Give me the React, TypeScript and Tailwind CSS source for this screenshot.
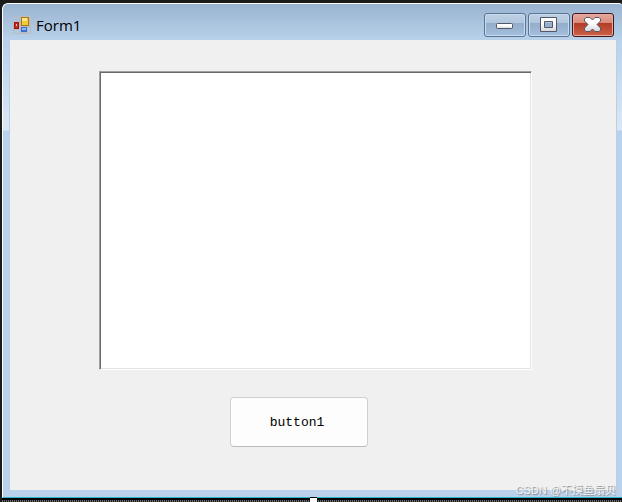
import type { ReactNode } from "react";

const FormIcon = () => (
  <svg width="18" height="18" viewBox="0 0 18 18" shapeRendering="crispEdges">
    <rect width="18" height="18" fill="#b9bcc2" />
    <rect x="1" y="1" width="6" height="4" fill="#a9c0dc" />
    <rect x="1" y="14" width="6" height="3" fill="#b4c8e0" />
    <rect x="15" y="12" width="2" height="5" fill="#b4c8e0" />
    <rect x="8" y="1" width="8" height="9" fill="#a87a10" />
    <rect x="9" y="2" width="6" height="7" fill="#f5c932" />
    <rect x="9" y="2" width="5" height="3" fill="#fde58a" />
    <rect x="1" y="6" width="5" height="7" fill="#a01414" />
    <rect x="2" y="7" width="3" height="5" fill="#c8281e" />
    <rect x="3" y="8" width="1" height="2" fill="#f4c0b8" />
    <rect x="8" y="11" width="6" height="5" fill="#3a70cc" />
    <rect x="9" y="12" width="4" height="2" fill="#8ab8f8" />
  </svg>
);

const GlyphFill = ({ id }: { id: string }) => (
  <defs>
    <linearGradient id={id} x1="0" y1="0" x2="0" y2="1">
      <stop offset="0.4" stopColor="#ffffff" />
      <stop offset="1" stopColor="#d3d6da" />
    </linearGradient>
  </defs>
);

const MinimizeIcon = () => (
  <svg width="18" height="18" viewBox="0 0 18 18">
    <GlyphFill id="min" />
    <rect
      x="0.5"
      y="7.5"
      width="16"
      height="5"
      rx="1"
      fill="url(#min)"
      stroke="#535666"
    />
  </svg>
);

const MaximizeIcon = () => (
  <svg width="18" height="18" viewBox="0 0 18 18">
    <GlyphFill id="max" />
    <path
      d="M0.5 1.5h16v14h-16z M4.5 5.5v6h8v-6z"
      fill="url(#max)"
      fillRule="evenodd"
      stroke="#535666"
      strokeLinejoin="round"
    />
  </svg>
);

const CloseIcon = () => (
  <svg width="18" height="18" viewBox="0 0 18 18">
    <GlyphFill id="close" />
    <path
      d="M0.5 3 2 1.5H6L8.5 4 11 1.5h4L16.500 3V5L13 8.500 16.500 12v2L15 15.500H11L8.500 13 6 15.500H2L0.500 14V12L4 8.500 0.500 5z"
      fill="url(#close)"
      stroke="#535666"
      strokeLinejoin="round"
    />
  </svg>
);

const CaptionButton = ({
  label,
  className,
  children,
}: {
  label: string;
  className: string;
  children: ReactNode;
}) => (
  <button
    type="button"
    aria-label={label}
    className={`flex h-6 w-[42px] items-center justify-center rounded-[3px] border ${className}`}
  >
    {children}
  </button>
);

const blue =
  "border-[#5c7391] bg-[linear-gradient(#bed0e4_0%,#b0c6de_42%,#93adca_43%,#a4c0de_100%)] shadow-[inset_0_0_0_1px_#c8dbee]";
const red =
  "border-[#43141f] bg-[linear-gradient(#e6a99c_0%,#d98a7b_42%,#b43c25_43%,#cb6249_100%)] shadow-[inset_0_0_0_1px_#e5aca0]";

const TitleBar = () => (
  <header className="flex h-9 items-start justify-between pl-1 pr-[3px]">
    <div className="flex items-start gap-[5px] pt-3">
      <FormIcon />
      <h1 className="font-['Open_Sans',sans-serif] text-[15px] leading-[18px] text-black">
        Form1
      </h1>
    </div>
    <div className="flex gap-0.5 pt-[9px]">
      <CaptionButton label="Minimize" className={blue}>
        <MinimizeIcon />
      </CaptionButton>
      <CaptionButton label="Maximize" className={blue}>
        <MaximizeIcon />
      </CaptionButton>
      <CaptionButton label="Close" className={red}>
        <CloseIcon />
      </CaptionButton>
    </div>
  </header>
);

const App = () => (
  <div className="relative flex min-h-screen flex-col bg-[#1b1b1b] pl-0.5 pt-[3px]">
    <div className="flex grow flex-col rounded-tl-[6px] rounded-tr-[3px] border-b border-l border-t border-white border-b-[#2cb5cf] bg-[#b9d1ea] bg-[linear-gradient(#99b4d1,#b9d1ea_36px,#dbe7f4_126px,#b9d1ea_127px)] pb-[7px] pl-1.5 pr-[5px]">
      <TitleBar />
      <main className="flex grow flex-col border-x border-[#b6d0ec] bg-[#f0f0f0] pb-[43px] pl-[89px] pr-[84px] pt-[31px]">
        <textarea
          aria-label="Text"
          className="block min-h-[299px] w-full grow resize-none border border-b-white border-l-[#a0a0a0] border-r-white border-t-[#a0a0a0] bg-white font-['Liberation_Mono',monospace] text-[13px] shadow-[inset_1px_1px_0_#696969,inset_-1px_-1px_0_#e3e3e3] outline-none"
        />
        <button
          type="button"
          className="ml-[131px] mt-[27px] h-[50px] w-[138px] rounded border border-[#d0d0d0] border-b-[#bbbbbb] bg-[#fdfdfd] pr-1 pt-0.5 font-['Liberation_Mono',monospace] text-[13px] leading-4 text-black"
        >
          button1
        </button>
      </main>
    </div>
    <div className="h-1 border-t-2 border-black bg-[repeating-linear-gradient(90deg,#6a6a6a_0_1px,#1b1b1b_1px_2px)]" />
    <span className="absolute bottom-0 left-1/2 h-[5px] w-[7px] -translate-x-px border-t border-black bg-white" />
    <p className="absolute bottom-1 right-1.5 font-['Liberation_Sans','Noto_Sans_CJK_SC',sans-serif] text-[11px] leading-4 text-[#f4f4f4] [text-shadow:1px_1px_1px_#808890]">
      CSDN @不摸鱼扇贝
    </p>
  </div>
);

export default App;
